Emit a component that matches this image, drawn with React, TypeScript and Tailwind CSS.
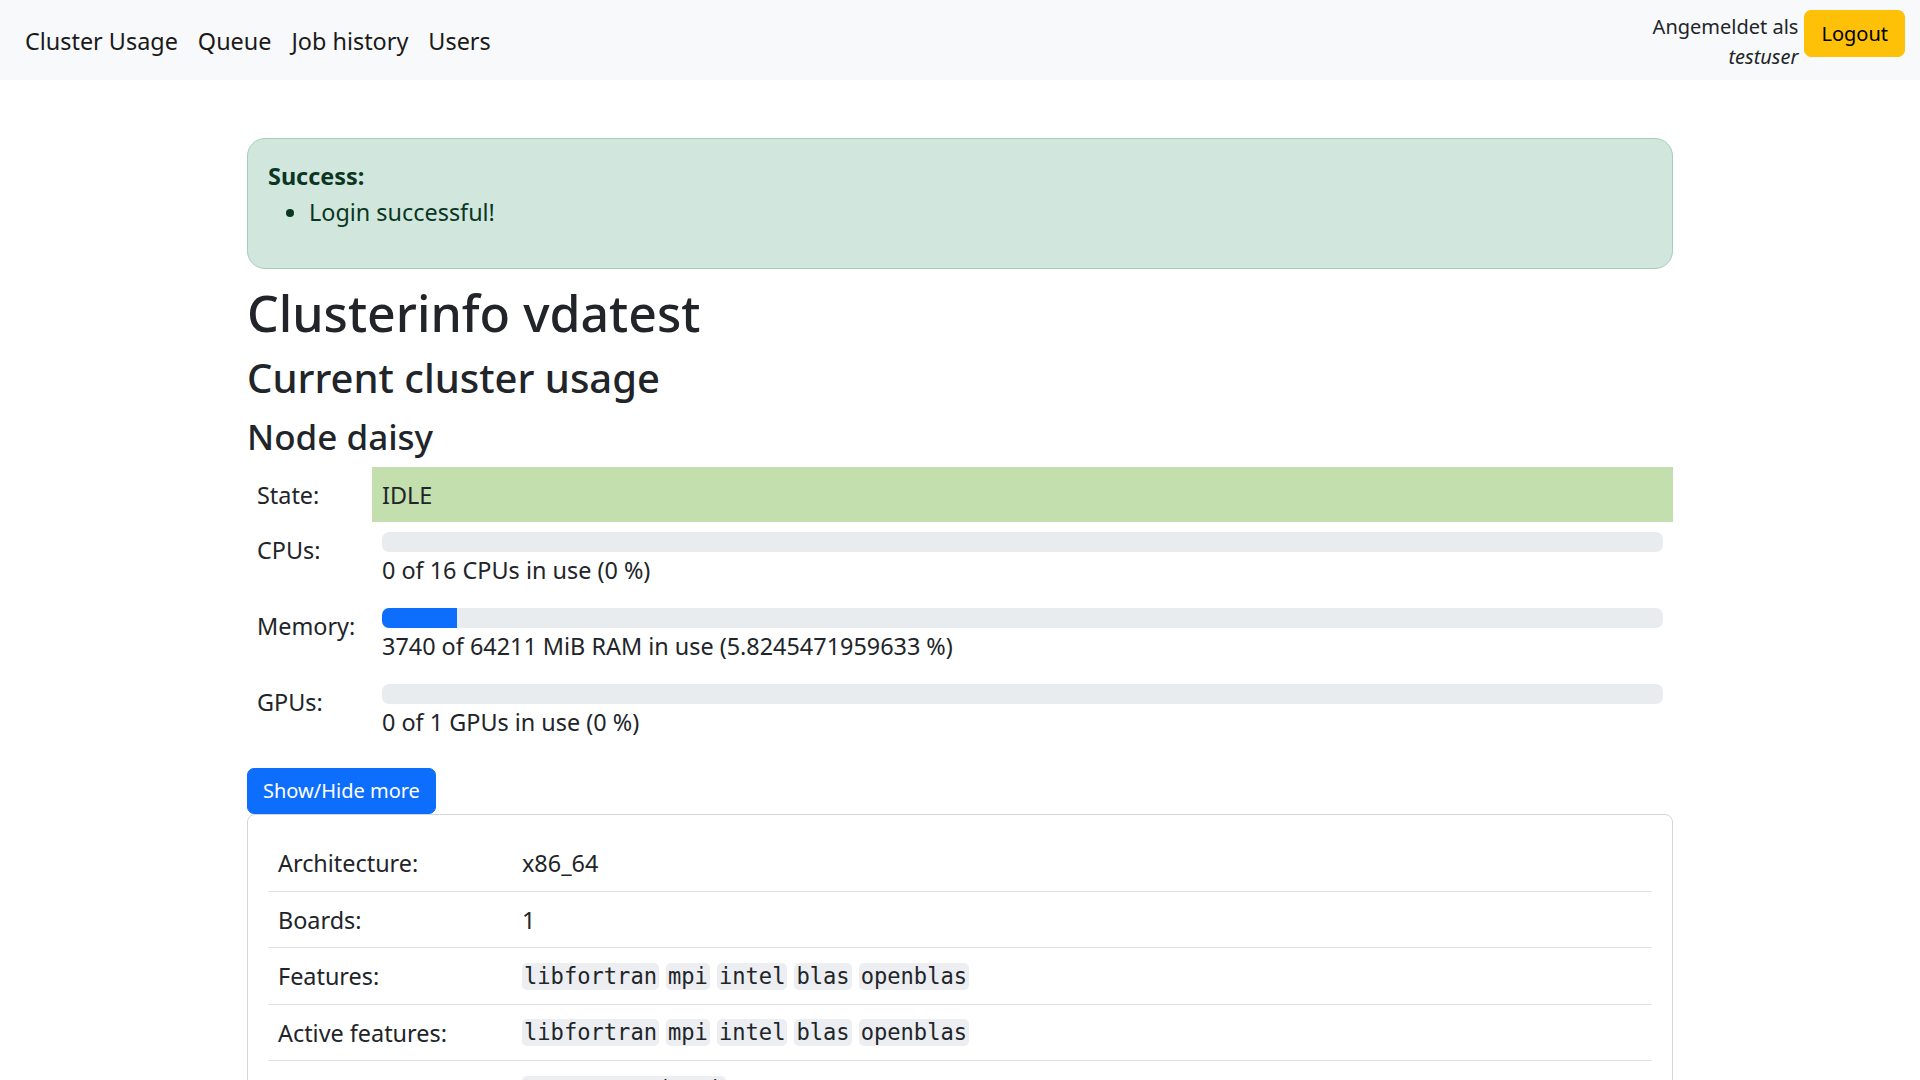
import { Fragment } from 'react';

const navLinks = ['Cluster Usage', 'Queue', 'Job history', 'Users'];

const usage = [
  { label: 'CPUs:', percent: 0, text: '0 of 16 CPUs in use (0 %)' },
  {
    label: 'Memory:',
    percent: 5.8245471959633,
    text: '3740 of 64211 MiB RAM in use (5.8245471959633 %)',
  },
  { label: 'GPUs:', percent: 0, text: '0 of 1 GPUs in use (0 %)' },
];

const features = ['libfortran', 'mpi', 'intel', 'blas', 'openblas'];

const Code = ({ items }: { items: string[] }) => (
  <div className="flex flex-row items-center gap-[7px] h-[36px]">
    {items.map((item) => (
      <code
        key={item}
        className="font-['DejaVu_Sans_Mono',monospace] text-[22.1px] leading-[27px] px-[2px] bg-[#eceef1] text-[#212529] rounded-[5px]"
      >
        {item}
      </code>
    ))}
  </div>
);

const details: { label: string; value: React.ReactNode }[] = [
  { label: 'Architecture:', value: 'x86_64' },
  { label: 'Boards:', value: '1' },
  { label: 'Features:', value: <Code items={features} /> },
  { label: 'Active features:', value: <Code items={features} /> },
  { label: 'Gres:', value: <Code items={['gpu:a100:1(S:0)']} /> },
];

const App = () => {
  return (
    <div className="min-h-screen bg-white font-['Noto_Sans',sans-serif] text-[#212529] text-[23.4px] leading-[36px]">
      {/* navbar */}
      <nav className="h-[80px] bg-[#f8f9fa] flex flex-row items-center justify-between pl-[15px] pr-[15px]">
        <ul className="flex flex-row items-center mt-[2px]">
          {navLinks.map((link) => (
            <li key={link}>
              <a className="block px-[10px] py-[8px] text-[#1a1a1a]" href="#">
                {link}
              </a>
            </li>
          ))}
        </ul>
        <div className="self-start mt-[10px] flex flex-row items-start gap-[6px]">
          <div className="mt-[2px] text-right text-[20px] leading-[30px] text-[#212529]">
            <div>Angemeldet als</div>
            <div className="italic">testuser</div>
          </div>
          <button className="h-[47px] px-[16px] text-[20px] leading-[30px] text-black bg-[#ffc107] border border-[#ffc107] rounded-[7px]">
            Logout
          </button>
        </div>
      </nav>

      <main className="w-[1426px] mx-auto">
        {/* flash message */}
        <div className="mt-[58px] h-[131px] border border-[#a3cfbb] bg-[#d1e7dd] text-[#0a3622] rounded-[18px] pt-[19px] px-[20px]">
          <div className="font-bold">Success:</div>
          <ul className="list-disc pl-[41px]">
            <li>Login successful!</li>
          </ul>
        </div>

        <h1 className="mt-[14px] text-[50px] leading-[60px] font-medium">
          Clusterinfo vdatest
        </h1>
        <h2 className="mt-[10.5px] text-[40px] leading-[48px] font-medium">
          Current cluster usage
        </h2>
        <h3 className="mt-[14.5px] text-[35px] leading-[41px] font-medium">
          Node daisy
        </h3>

        {/* node usage */}
        <div className="mt-[10px] grid grid-cols-[125px_1fr]">
          <div className="h-[55px] flex items-center px-[10px]">State:</div>
          <div className="h-[55px] flex items-center px-[10px] bg-[#c2dfad]">
            IDLE
          </div>
          {usage.map((row) => (
            <Fragment key={row.label}>
              <div className="px-[10px] pt-[10px] pb-[10px]">{row.label}</div>
              <div className="px-[10px] pt-[10px] pb-[10px]">
                <div className="h-[20px] bg-[#e9ecef] rounded-[7px] overflow-hidden flex">
                  <div
                    className="h-full bg-[#0d6efd]"
                    style={{ width: `${row.percent}%` }}
                  />
                </div>
                <div>{row.text}</div>
              </div>
            </Fragment>
          ))}
        </div>

        <button className="mt-[18px] h-[46px] px-[15px] text-[20px] leading-[30px] text-white bg-[#0d6efd] border border-[#0d6efd] rounded-[7px]">
          Show/Hide more
        </button>

        {/* details */}
        <div className="border border-[#d5d5d5] rounded-[8px] p-[20px]">
          <div className="flex flex-col">
            {details.map((row) => (
              <div
                key={row.label}
                className="flex flex-row border-b border-[#dee2e6] pt-[10px] pb-[9.5px]"
              >
                <div className="w-[244px] px-[10px]">{row.label}</div>
                <div className="flex-1 px-[10px]">{row.value}</div>
              </div>
            ))}
          </div>
        </div>
      </main>
    </div>
  );
};

export default App;
